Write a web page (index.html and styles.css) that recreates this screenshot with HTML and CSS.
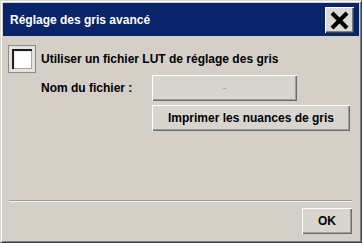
FILE: index.html
```html
<!DOCTYPE html>
<html lang="fr">
<head>
<meta charset="utf-8">
<title>Réglage des gris avancé</title>
<link rel="stylesheet" href="styles.css">
</head>
<body>
<div class="dialog">
  <div class="titlebar">
    <span class="title">Réglage des gris avancé</span>
    <button class="close" type="button" aria-label="Fermer">
      <svg width="19" height="19" viewBox="0 0 19 19"><path d="M2 2 L17 17 M17 2 L2 17" stroke="#000" stroke-width="4.2" stroke-linecap="butt"/></svg>
    </button>
  </div>
  <div class="content">
    <label class="check-row">
      <span class="checkbox"></span>
      <span class="label">Utiliser un fichier LUT de réglage des gris</span>
    </label>
    <div class="grid">
      <span class="label">Nom du fichier :</span>
      <div class="btn field">-</div>
      <div class="btn print">Imprimer les nuances de gris</div>
    </div>
  </div>
  <div class="footer">
    <div class="separator"></div>
    <div class="actions">
      <div class="btn ok">OK</div>
    </div>
  </div>
</div>
</body>
</html>
```
FILE: styles.css
```css
* { box-sizing: border-box; }
html, body { margin: 0; padding: 0; }
body {
  width: 362px;
  height: 243px;
  background: #d4d0c8;
  font-family: "Liberation Sans", Arial, sans-serif;
  font-size: 12px;
  font-weight: bold;
  color: #000;
  overflow: hidden;
}
.dialog {
  width: 362px;
  height: 243px;
  display: flex;
  flex-direction: column;
  background: #d4d0c8;
  border-top: 1px solid #dcd9d2;
  border-left: 1px solid #dcd9d2;
  border-right: 1px solid #404040;
  border-bottom: 1px solid #404040;
  box-shadow: inset 1px 1px 0 #ffffff, inset -1px -1px 0 #808080;
  padding: 2px;
}
.titlebar {
  height: 33px;
  background: #0a246a;
  display: flex;
  align-items: center;
  justify-content: space-between;
  padding: 0 5px 0 7px;
  flex-shrink: 0;
}
.title {
  color: #fff;
  font-size: 12px;
  font-weight: bold;
}
.close {
  width: 29px;
  height: 26px;
  margin-top: 1px;
  padding: 0;
  background: #dcdad5;
  border: 0;
  box-shadow: inset 1px 1px 0 #fff, inset -1px -1px 0 #404040, inset -2px -2px 0 #808080;
  display: flex;
  align-items: center;
  justify-content: center;
}
.content {
  padding: 9px 0 0 5px;
  display: flex;
  flex-direction: column;
}
.check-row {
  display: flex;
  align-items: center;
  height: 27px;
  gap: 5px;
}
.checkbox {
  width: 28px;
  height: 28px;
  flex-shrink: 0;
  background: #fff;
  border: 1px solid #8c8a85;
  box-shadow:
    inset 0 0 0 3px #e4e2de,
    inset 5px 5px 0 #1e1e1e,
    inset -4px -4px 0 #a8a6a1,
    inset 6px 6px 0 #ecebe8;
}
.grid {
  display: grid;
  grid-template-columns: 111px 145px;
  row-gap: 4px;
  margin-top: 3px;
  padding-left: 33px;
  align-items: center;
}
.btn {
  background: #d8d5cf;
  box-shadow: inset 1px 1px 0 #fff, inset -1px -1px 0 #6e6c68, inset -2px -2px 0 #a09d98;
  display: flex;
  align-items: center;
  justify-content: center;
  font-size: 12px;
  font-weight: bold;
}
.field {
  height: 26px;
  color: #a8a6a2;
  font-weight: normal;
}
.print {
  grid-column: 2;
  width: 198px;
  height: 26px;
}
.footer {
  margin-top: auto;
  padding: 0 7px 6px 6px;
}
.separator {
  height: 2px;
  border-top: 1px solid #a09d98;
  border-bottom: 1px solid #f4f3f0;
}
.actions {
  display: flex;
  justify-content: flex-end;
  margin-top: 6px;
}
.ok {
  width: 50px;
  height: 26px;
}
```
